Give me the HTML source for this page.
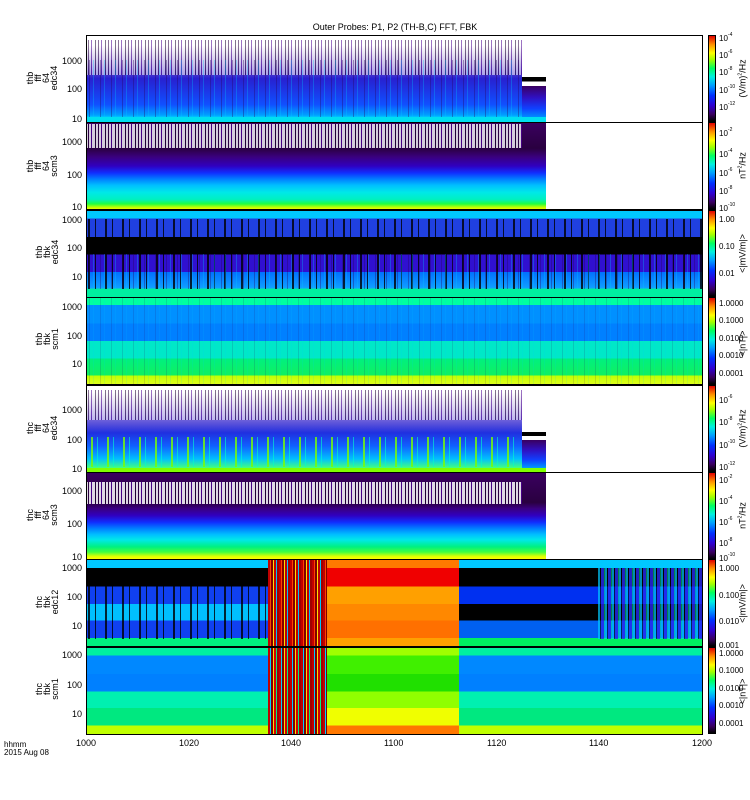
<!DOCTYPE html>
<html><head><meta charset="utf-8"><style>
body{margin:0;background:#fff;width:750px;height:800px;position:relative;overflow:hidden;font-family:"Liberation Sans",sans-serif;color:#000}
div{position:absolute;box-sizing:border-box}
.t{font-size:9px;line-height:9px;white-space:nowrap}
.yl{font-size:9px;text-align:right;width:40px;left:42px;line-height:9px}
.lab{font-size:9px;line-height:8px;text-align:center;transform:rotate(-90deg);transform-origin:center;width:60px}
.cb{left:708px;width:8px;border:1px solid #000;background:linear-gradient(to top,#000 0%,#3a0060 8%,#3000d0 18%,#0030ff 30%,#00a0ff 42%,#00f0e0 52%,#00ff60 62%,#a0ff00 72%,#ffff00 80%,#ff9000 90%,#e00000 100%)}
.cl{left:719px;font-size:8px;line-height:9px;white-space:nowrap}
.cl sup{font-size:5px;vertical-align:5px;line-height:0}
.un{font-size:9px;transform:rotate(-90deg);width:90px;text-align:center;line-height:9px;white-space:nowrap}
.un sup{font-size:5px;vertical-align:4px;line-height:0}
.fr{border:1px solid #000;left:86px;width:617px}
.s1{background-image:repeating-linear-gradient(90deg,rgba(0,0,0,.0) 0 3px,rgba(40,0,90,.35) 3px 4px,rgba(0,0,0,0) 4px 7px,rgba(0,200,255,.3) 7px 8px,rgba(0,0,0,0) 8px 11px)}
.s2{background-image:repeating-linear-gradient(90deg,rgba(0,0,0,0) 0 2px,rgba(0,0,0,.8) 2px 4px,rgba(0,0,0,0) 4px 9px,rgba(0,0,0,.8) 9px 10px,rgba(0,0,0,0) 10px 17px)}
.wn{background-image:repeating-linear-gradient(90deg,#fff 0 2px,#2a0040 2px 3px,#fff 3px 5px,#4a0090 5px 6px,#fff 6px 9px,#1a0030 9px 10px)}
</style></head><body>
<div class="t" style="left:290px;top:23px;width:210px;text-align:center">Outer Probes: P1, P2 (TH-B,C) FFT, FBK</div>

<!-- Panel 1 -->
<div style="left:86px;top:35px;width:436px;height:87px;background:linear-gradient(to bottom,#fff 0,#fff 12%,rgba(255,255,255,0) 50%),linear-gradient(to bottom,#3a0070 0,#3010c0 40%,#2030e0 60%,#1050ff 80%,#00a0ff 92%,#00e0ff 96%,#60ff80 100%)"></div>
<div class="wn" style="left:86px;top:40px;width:436px;height:35px;opacity:.55"></div>
<div class="s1" style="left:86px;top:60px;width:436px;height:60px"></div>
<div style="left:522px;top:77px;width:24px;height:45px;background:linear-gradient(to bottom,#000 0,#000 10%,#fff 10%,#fff 20%,#3a0060 20%,#3010c0 45%,#1040ff 70%,#0090ff 90%,#00e0ff 100%)"></div>
<div style="left:86px;top:117px;width:460px;height:5px;background:#00e0f0"></div>
<div class="fr" style="top:35px;height:88px"></div>

<!-- Panel 2 -->
<div style="left:86px;top:122px;width:460px;height:88px;background:linear-gradient(to bottom,#3a0060 0,#2a0040 30%,#3a0080 40%,#3000c0 50%,#1030ff 58%,#0080ff 65%,#00c0ff 72%,#00e8e8 80%,#00f0c0 88%,#20ff40 93%,#c0ff00 97%,#ffff00 100%)"></div>
<div class="wn" style="left:86px;top:124px;width:436px;height:24px;opacity:.8"></div>
<div class="fr" style="top:122px;height:88px"></div>

<!-- Panel 3 -->
<div style="left:86px;top:210px;width:617px;height:87px;background:linear-gradient(to bottom,#00c8ff 0,#00c8ff 10%,#2040e0 10%,#2040e0 31%,#000 31%,#000 51%,#3010d0 51%,#3010d0 71%,#0070ff 71%,#10a0ff 90%,#00f0a0 90%,#00f0a0 100%)"></div>
<div class="s2" style="left:86px;top:219px;width:617px;height:70px"></div>
<div style="left:86px;top:237px;width:180px;height:17px;background:#000"></div>
<div class="s1" style="left:86px;top:254px;width:617px;height:35px"></div>
<div class="fr" style="top:210px;height:88px"></div>

<!-- Panel 4 -->
<div style="left:86px;top:297px;width:617px;height:88px;background:linear-gradient(to bottom,#00ffa0 0,#00ffa0 9%,#0090ff 9%,#0090ff 30%,#0080ff 30%,#0080ff 50%,#00e8c8 50%,#00e8c8 70%,#00f080 70%,#10f060 89%,#c0ff00 89%,#e0ff20 100%)"></div>
<div class="s1" style="left:86px;top:297px;width:617px;height:88px;opacity:.4"></div>
<div class="fr" style="top:297px;height:88px"></div>

<!-- Panel 5 -->
<div style="left:86px;top:385px;width:436px;height:87px;background:linear-gradient(to bottom,#fff 0,#fff 8%,rgba(255,255,255,0) 55%),linear-gradient(to bottom,#3a0070 0,#3010c0 35%,#2030e0 55%,#1060ff 70%,#00c0ff 85%,#40ff80 95%,#a0ff00 100%)"></div>
<div class="wn" style="left:86px;top:390px;width:436px;height:30px;opacity:.55"></div>
<div style="left:86px;top:437px;width:436px;height:30px;background-image:repeating-linear-gradient(90deg,rgba(0,0,0,0) 0 5px,rgba(120,255,0,.8) 5px 7px,rgba(0,0,0,0) 7px 11px,rgba(0,255,200,.6) 11px 12px,rgba(0,0,0,0) 12px 16px)"></div>
<div style="left:522px;top:432px;width:24px;height:40px;background:linear-gradient(to bottom,#000 0,#000 10%,#fff 10%,#fff 20%,#3a0060 20%,#3010c0 45%,#1040ff 70%,#0090ff 88%,#20ff60 100%)"></div>
<div style="left:86px;top:468px;width:460px;height:4px;background:#80ff00"></div>
<div class="fr" style="top:385px;height:88px"></div>

<!-- Panel 6 -->
<div style="left:86px;top:472px;width:460px;height:87px;background:linear-gradient(to bottom,#3a0060 0,#2a0040 35%,#3a0080 42%,#3000c0 50%,#1030ff 58%,#0080ff 65%,#00c0ff 72%,#00e8e8 78%,#00f080 86%,#40ff40 92%,#e0ff00 97%,#ffff00 100%)"></div>
<div class="wn" style="left:86px;top:482px;width:436px;height:22px;opacity:.85"></div>
<div class="fr" style="top:472px;height:88px"></div>

<!-- Panel 7 -->
<div style="left:86px;top:559px;width:182px;height:88px;background:linear-gradient(to bottom,#00c8ff 0,#00c8ff 10%,#000 10%,#000 31%,#1040f0 31%,#1040f0 51%,#00c0ff 51%,#00c0ff 70%,#1040f0 70%,#1040f0 90%,#00f080 90%)"></div>
<div class="s2" style="left:86px;top:568px;width:182px;height:71px"></div>
<div style="left:268px;top:559px;width:59px;height:88px;background-image:repeating-linear-gradient(90deg,#c00000 0 2px,#ff4000 2px 3px,#800000 3px 5px,#ffe000 5px 6px,#c00000 6px 8px,#00c0ff 8px 9px,#a00000 9px 11px)"></div>
<div style="left:327px;top:559px;width:132px;height:88px;background:linear-gradient(to bottom,#ff7800 0,#ff7800 10%,#f00000 10%,#f00000 31%,#ffa000 31%,#ffa000 51%,#ff8800 51%,#ff8800 70%,#ff7000 70%,#ff7000 90%,#ffa000 90%)"></div>
<div style="left:459px;top:559px;width:244px;height:88px;background:linear-gradient(to bottom,#00c8ff 0,#00c8ff 10%,#000 10%,#000 31%,#0030f0 31%,#0030f0 51%,#000 51%,#000 70%,#0060f0 70%,#0060f0 90%,#00f060 90%)"></div>
<div style="left:598px;top:568px;width:105px;height:71px;background-image:repeating-linear-gradient(90deg,rgba(0,200,255,.7) 0 2px,rgba(0,0,0,.6) 2px 3px,rgba(40,40,240,.8) 3px 6px,rgba(0,255,150,.5) 6px 7px)"></div>
<div class="fr" style="top:559px;height:88px"></div>

<!-- Panel 8 -->
<div style="left:86px;top:647px;width:182px;height:87px;background:linear-gradient(to bottom,#00f0a0 0,#00f0a0 10%,#0088ff 10%,#0088ff 31%,#0080ff 31%,#0080ff 51%,#00f0b0 51%,#00f0b0 70%,#00e880 70%,#00e880 90%,#c0ff00 90%)"></div>
<div style="left:268px;top:647px;width:59px;height:87px;background-image:repeating-linear-gradient(90deg,#c00000 0 2px,#00d0ff 2px 3px,#800000 3px 5px,#ffe000 5px 6px,#d00000 6px 8px,#00f080 8px 9px,#a00000 9px 11px)"></div>
<div style="left:327px;top:647px;width:132px;height:87px;background:linear-gradient(to bottom,#a0ff00 0,#a0ff00 10%,#40f000 10%,#40f000 31%,#20e000 31%,#20e000 51%,#90ff00 51%,#90ff00 70%,#f0ff00 70%,#f0ff00 90%,#ff7800 90%)"></div>
<div style="left:459px;top:647px;width:244px;height:87px;background:linear-gradient(to bottom,#00f0a0 0,#00f0a0 10%,#0088ff 10%,#0088ff 31%,#0080ff 31%,#0080ff 51%,#00f0b0 51%,#00f0b0 70%,#00e880 70%,#00e880 90%,#c0ff00 90%)"></div>
<div class="fr" style="top:647px;height:88px"></div>

<!-- y labels -->
<div class="yl" style="top:57px">1000</div><div class="yl" style="top:85px">100</div><div class="yl" style="top:115px">10</div>
<div class="yl" style="top:138px">1000</div><div class="yl" style="top:171px">100</div><div class="yl" style="top:203px">10</div>
<div class="yl" style="top:216px">1000</div><div class="yl" style="top:244px">100</div><div class="yl" style="top:273px">10</div>
<div class="yl" style="top:303px">1000</div><div class="yl" style="top:332px">100</div><div class="yl" style="top:360px">10</div>
<div class="yl" style="top:406px">1000</div><div class="yl" style="top:436px">100</div><div class="yl" style="top:465px">10</div>
<div class="yl" style="top:487px">1000</div><div class="yl" style="top:520px">100</div><div class="yl" style="top:553px">10</div>
<div class="yl" style="top:564px">1000</div><div class="yl" style="top:593px">100</div><div class="yl" style="top:622px">10</div>
<div class="yl" style="top:651px">1000</div><div class="yl" style="top:681px">100</div><div class="yl" style="top:710px">10</div>

<!-- panel labels -->
<div class="lab" style="left:12px;top:62px;height:32px">thb<br>fff<br>64<br>edc34</div>
<div class="lab" style="left:12px;top:150px;height:32px">thb<br>fff<br>64<br>scm3</div>
<div class="lab" style="left:17px;top:240px;height:24px">thb<br>fbk<br>edc34</div>
<div class="lab" style="left:17px;top:327px;height:24px">thb<br>fbk<br>scm1</div>
<div class="lab" style="left:12px;top:412px;height:32px">thc<br>fff<br>64<br>edc34</div>
<div class="lab" style="left:12px;top:499px;height:32px">thc<br>fff<br>64<br>scm3</div>
<div class="lab" style="left:17px;top:590px;height:24px">thc<br>fbk<br>edc12</div>
<div class="lab" style="left:17px;top:677px;height:24px">thc<br>fbk<br>scm1</div>

<!-- colorbars -->
<div class="cb" style="top:35px;height:87px"></div>
<div class="cb" style="top:122px;height:88px"></div>
<div class="cb" style="top:210px;height:87px"></div>
<div class="cb" style="top:297px;height:88px"></div>
<div class="cb" style="top:385px;height:87px"></div>
<div class="cb" style="top:472px;height:88px"></div>
<div class="cb" style="top:559px;height:88px"></div>
<div class="cb" style="top:647px;height:87px"></div>

<div class="cl" style="top:34px">10<sup>-4</sup></div>
<div class="cl" style="top:51px">10<sup>-6</sup></div>
<div class="cl" style="top:68px">10<sup>-8</sup></div>
<div class="cl" style="top:86px">10<sup>-10</sup></div>
<div class="cl" style="top:103px">10<sup>-12</sup></div>
<div class="cl" style="top:129px">10<sup>-2</sup></div>
<div class="cl" style="top:150px">10<sup>-4</sup></div>
<div class="cl" style="top:169px">10<sup>-6</sup></div>
<div class="cl" style="top:187px">10<sup>-8</sup></div>
<div class="cl" style="top:204px">10<sup>-10</sup></div>
<div class="cl" style="top:215px">1.00</div>
<div class="cl" style="top:242px">0.10</div>
<div class="cl" style="top:269px">0.01</div>
<div class="cl" style="top:299px">1.0000</div>
<div class="cl" style="top:316px">0.1000</div>
<div class="cl" style="top:334px">0.0100</div>
<div class="cl" style="top:351px">0.0010</div>
<div class="cl" style="top:369px">0.0001</div>
<div class="cl" style="top:396px">10<sup>-6</sup></div>
<div class="cl" style="top:418px">10<sup>-8</sup></div>
<div class="cl" style="top:441px">10<sup>-10</sup></div>
<div class="cl" style="top:463px">10<sup>-12</sup></div>
<div class="cl" style="top:476px">10<sup>-2</sup></div>
<div class="cl" style="top:497px">10<sup>-4</sup></div>
<div class="cl" style="top:518px">10<sup>-6</sup></div>
<div class="cl" style="top:539px">10<sup>-8</sup></div>
<div class="cl" style="top:554px">10<sup>-10</sup></div>
<div class="cl" style="top:564px">1.000</div>
<div class="cl" style="top:591px">0.100</div>
<div class="cl" style="top:617px">0.010</div>
<div class="cl" style="top:641px">0.001</div>
<div class="cl" style="top:649px">1.0000</div>
<div class="cl" style="top:666px">0.1000</div>
<div class="cl" style="top:684px">0.0100</div>
<div class="cl" style="top:701px">0.0010</div>
<div class="cl" style="top:719px">0.0001</div>

<div class="un" style="left:698px;top:74px">(V/m)<sup>2</sup>/Hz</div>
<div class="un" style="left:698px;top:161px">nT<sup>2</sup>/Hz</div>
<div class="un" style="left:698px;top:249px">&lt;|mV/m|&gt;</div>
<div class="un" style="left:698px;top:339px">&lt;|nT|&gt;</div>
<div class="un" style="left:698px;top:424px">(V/m)<sup>2</sup>/Hz</div>
<div class="un" style="left:698px;top:511px">nT<sup>2</sup>/Hz</div>
<div class="un" style="left:698px;top:599px">&lt;|mV/m|&gt;</div>
<div class="un" style="left:698px;top:687px">&lt;|nT|&gt;</div>

<!-- x axis -->
<div class="t" style="left:76px;top:739px">1000</div>
<div class="t" style="left:179px;top:739px">1020</div>
<div class="t" style="left:281px;top:739px">1040</div>
<div class="t" style="left:384px;top:739px">1100</div>
<div class="t" style="left:487px;top:739px">1120</div>
<div class="t" style="left:589px;top:739px">1140</div>
<div class="t" style="left:692px;top:739px">1200</div>
<div class="t" style="left:4px;top:740px;font-size:8px">hhmm</div>
<div class="t" style="left:4px;top:748px;font-size:8px">2015 Aug 08</div>
</body></html>
